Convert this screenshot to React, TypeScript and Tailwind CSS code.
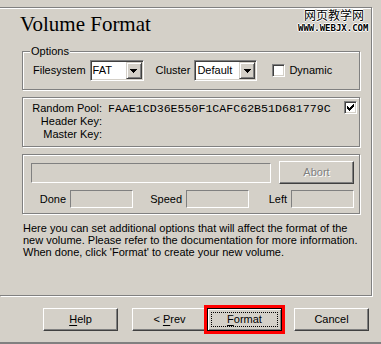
import React from 'react';

const raised =
  'border border-t-white border-l-white border-b-[#404040] border-r-[#404040] shadow-[inset_-1px_-1px_0_#808080] bg-[#d4d0c8]';
const etched = 'border border-[#808080] shadow-[inset_1px_1px_0_#fff,1px_1px_0_#fff]';
const sunken =
  'border border-t-[#808080] border-l-[#808080] border-b-white border-r-white shadow-[inset_1px_1px_0_#404040,inset_-1px_-1px_0_#d4d0c8]';
const thinSunken = 'border border-t-[#808080] border-l-[#808080] border-b-white border-r-white';

const Arrow = () => (
  <svg width="7" height="4" viewBox="0 0 7 4" shapeRendering="crispEdges">
    <path d="M0 0h7v1h-7z M1 1h5v1h-5z M2 2h3v1h-3z M3 3h1v1h-1z" fill="#000" />
  </svg>
);

const Check = () => (
  <svg width="7" height="7" viewBox="0 0 7 7" shapeRendering="crispEdges">
    <path
      d="M6 0h1v1h-1z M5 1h2v1h-2z M0 2h1v1h-1z M4 2h3v1h-3z M0 3h2v1h-2z M3 3h3v1h-3z M0 4h5v1h-5z M1 5h3v1h-3z M2 6h1v1h-1z"
      fill="#000"
    />
  </svg>
);

const Select: React.FC<{ value: string; width: string }> = ({ value, width }) => (
  <div className={`flex h-[21px] bg-white p-[1px] ${sunken} ${width}`}>
    <span className="flex-1 pl-[1px] leading-[17px]">{value}</span>
    <div
      className="flex w-[16px] items-center justify-center border border-t-[#d4d0c8] border-l-[#d4d0c8] border-b-[#404040] border-r-[#404040] bg-[#d4d0c8] shadow-[inset_1px_1px_0_#fff,inset_-1px_-1px_0_#808080]"
    >
      <Arrow />
    </div>
  </div>
);

const CheckBox: React.FC<{ checked?: boolean }> = ({ checked }) => (
  <div className={`flex h-[13px] w-[13px] items-center justify-center bg-white ${sunken}`}>
    {checked && <Check />}
  </div>
);

export default function App() {
  return (
    <div className="relative h-[344px] w-[381px] overflow-hidden border-b-2 border-b-[#808080] bg-[#d4d0c8] font-['Liberation_Sans',Arial,sans-serif] text-[11px] leading-[13px] text-black">
      {/* watermark */}
      <span className="absolute left-[304px] top-[9px] font-['Noto_Sans_CJK_SC',sans-serif] text-[12px] leading-none [text-shadow:1px_0_0_#fff,-1px_0_0_#fff,0_1px_0_#fff,0_-1px_0_#fff]">
        网页教学网
      </span>
      <span className="absolute left-[298px] top-[24px] font-['DejaVu_Sans_Mono',monospace] text-[9px] font-bold leading-[9px] [text-shadow:1px_0_0_#fff,-1px_0_0_#fff,0_1px_0_#fff,0_-1px_0_#fff]">
        WWW.WEBJX.COM
      </span>

      <div className="pr-[9px] pt-[7px]">
        <div className="h-[289px] border-b border-r border-t border-[#808080] pt-[6px] shadow-[inset_0_1px_0_#fff,1px_1px_0_#fff]">
          <h1 className="ml-[20px] font-['Liberation_Serif','Times_New_Roman',serif] text-[21px] leading-[21px]">
            Volume Format
          </h1>

          {/* Options */}
          <div className={`relative ml-[22px] mt-[16px] flex h-[39px] w-[338px] items-center pl-[10px] ${etched}`}>
            <span className="absolute -top-[7px] left-[7px] bg-[#d4d0c8] px-[1px]">Options</span>
            <span>Filesystem</span>
            <div className="ml-[4px]">
              <Select value="FAT" width="w-[54px]" />
            </div>
            <span className="ml-[12px]">Cluster</span>
            <div className="ml-[4px]">
              <Select value="Default" width="w-[63px]" />
            </div>
            <div className="ml-[15px]">
              <CheckBox />
            </div>
            <span className="ml-[4px]">Dynamic</span>
          </div>

          {/* Keys */}
          <div className={`ml-[22px] mt-[7px] flex h-[50px] w-[338px] items-start pt-[4px] ${etched}`}>
            <div className="flex w-[79px] flex-col items-end">
              <span>Random Pool:</span>
              <span>Header Key:</span>
              <span>Master Key:</span>
            </div>
            <span className="ml-[6px] font-['Liberation_Mono','Courier_New',monospace] text-[11.6px]">
              FAAE1CD36E550F1CAFC62B51D681779C
            </span>
            <div className="-mt-[1px] ml-auto mr-[2px]">
              <CheckBox checked />
            </div>
          </div>

          {/* Progress */}
          <div className={`ml-[22px] mt-[7px] h-[60px] w-[338px] pl-[8px] pt-[6px] ${etched}`}>
            <div className="flex items-center">
              <div className={`h-[20px] w-[240px] ${thinSunken}`} />
              <button className={`ml-[8px] h-[23px] w-[75px] text-[#808080] [text-shadow:1px_1px_0_#fff] ${raised}`}>
                Abort
              </button>
            </div>
            <div className="mt-[6px] flex items-center">
              <span className="w-[39px] pr-[4px] text-right">Done</span>
              <div className={`h-[18px] w-[63px] ${thinSunken}`} />
              <span className="w-[53px] pr-[4px] text-right">Speed</span>
              <div className={`h-[18px] w-[63px] ${thinSunken}`} />
              <span className="w-[42px] pr-[4px] text-right">Left</span>
              <div className={`h-[18px] w-[63px] ${thinSunken}`} />
            </div>
          </div>

          <p className="ml-[23px] mt-[8px] whitespace-nowrap leading-[12px]">
            Here you can set additional options that will affect the format of the
            <br />
            new volume. Please refer to the documentation for more information.
            <br />
            When done, click 'Format' to create your new volume.
          </p>
        </div>
      </div>

      {/* Buttons */}
      <div className="ml-[43px] mt-[12px] flex">
        <button className={`h-[23px] w-[75px] ${raised}`}>
          <span className="underline underline-offset-2">H</span>elp
        </button>
        <button className={`ml-[14px] h-[23px] w-[75px] ${raised}`}>
          &lt; <span className="underline underline-offset-2">P</span>rev
        </button>
        <button className="flex h-[23px] w-[75px] border border-black bg-[#d4d0c8] p-[3px] shadow-[inset_1px_1px_0_#fff,inset_-1px_-1px_0_#808080] outline-3 outline-[#ff0000]">
          <span className="flex h-full flex-1 items-center justify-center border border-dotted border-black">
            <span className="underline underline-offset-2">F</span>ormat
          </span>
        </button>
        <button className={`ml-[12px] h-[23px] w-[75px] ${raised}`}>Cancel</button>
      </div>
    </div>
  );
}
